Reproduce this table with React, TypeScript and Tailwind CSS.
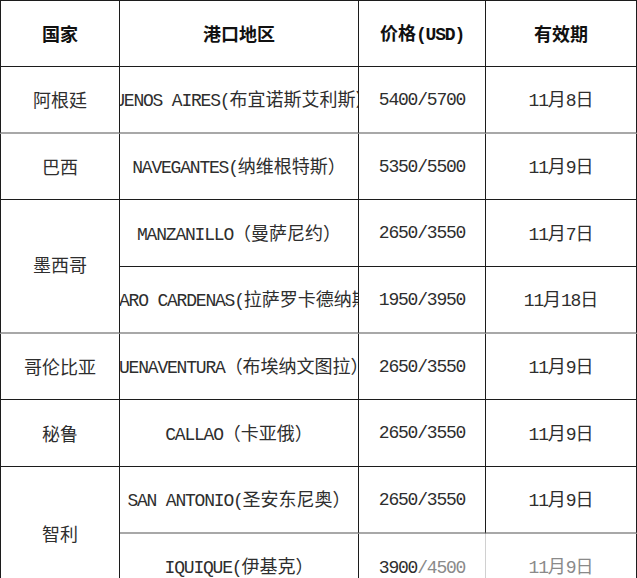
import React from "react";

const CJK = /([\u3000-\u9fff\uff00-\uffef]+)/;

function Mixed({ text, bold = false }: { text: string; bold?: boolean }) {
  return (
    <span className="whitespace-nowrap leading-none">
      {text
        .split(CJK)
        .filter(Boolean)
        .map((part, i) =>
          CJK.test(part) ? (
            <span
              key={i}
              className={
                bold
                  ? "font-['Noto_Sans_CJK_SC',sans-serif] text-[18px] font-bold"
                  : "font-['Noto_Sans_CJK_SC',sans-serif] text-[18px] font-normal"
              }
            >
              {part}
            </span>
          ) : (
            <span
              key={i}
              className={
                bold
                  ? "font-['Liberation_Mono',monospace] text-[18px] font-bold tracking-[-1.2px]"
                  : "font-['Liberation_Mono',monospace] text-[18px] tracking-[-1.2px]"
              }
            >
              {part}
            </span>
          )
        )}
    </span>
  );
}

function Cell({
  children,
  className = "",
}: {
  children?: React.ReactNode;
  className?: string;
}) {
  return (
    <div
      className={
        "flex items-center justify-center overflow-hidden whitespace-nowrap border-r border-b border-[#1c1c1c] text-[#2e2e2e] " +
        className
      }
    >
      {children}
    </div>
  );
}

const gray = "border-b-2 border-b-[#a8a8a8]";

export default function App() {
  return (
    <div className="h-[578px] w-[637px] overflow-hidden bg-white">
      <div className="grid grid-cols-[120px_239px_127px_151px] grid-rows-[67px_67px_66px_67px_67px_66px_67px_67px_66px]">
        {/* header */}
        <Cell className="border-t border-l text-[#111]">
          <Mixed text="国家" bold />
        </Cell>
        <Cell className="border-t text-[#111]">
          <Mixed text="港口地区" bold />
        </Cell>
        <Cell className="border-t text-[#111]">
          <Mixed text="价格(USD)" bold />
        </Cell>
        <Cell className="border-t text-[#111]">
          <Mixed text="有效期" bold />
        </Cell>

        {/* 阿根廷 */}
        <Cell className={"border-l " + gray}>
          <Mixed text="阿根廷" />
        </Cell>
        <Cell className={gray}>
          <Mixed text="BUENOS AIRES(布宜诺斯艾利斯）" />
        </Cell>
        <Cell className={gray}>
          <Mixed text="5400/5700" />
        </Cell>
        <Cell className={gray}>
          <Mixed text="11月8日" />
        </Cell>

        {/* 巴西 */}
        <Cell className="border-l">
          <Mixed text="巴西" />
        </Cell>
        <Cell>
          <Mixed text="NAVEGANTES(纳维根特斯）" />
        </Cell>
        <Cell>
          <Mixed text="5350/5500" />
        </Cell>
        <Cell>
          <Mixed text="11月9日" />
        </Cell>

        {/* 墨西哥 */}
        <Cell className={"row-span-2 border-l pb-1 " + gray}>
          <Mixed text="墨西哥" />
        </Cell>
        <Cell>
          <Mixed text="MANZANILLO（曼萨尼约）" />
        </Cell>
        <Cell>
          <Mixed text="2650/3550" />
        </Cell>
        <Cell>
          <Mixed text="11月7日" />
        </Cell>
        <Cell className={gray}>
          <Mixed text="LAZARO CARDENAS(拉萨罗卡德纳斯）" />
        </Cell>
        <Cell className={gray}>
          <Mixed text="1950/3950" />
        </Cell>
        <Cell className={gray}>
          <Mixed text="11月18日" />
        </Cell>

        {/* 哥伦比亚 */}
        <Cell className="border-l">
          <Mixed text="哥伦比亚" />
        </Cell>
        <Cell>
          <Mixed text="BUENAVENTURA（布埃纳文图拉）" />
        </Cell>
        <Cell>
          <Mixed text="2650/3550" />
        </Cell>
        <Cell>
          <Mixed text="11月9日" />
        </Cell>

        {/* 秘鲁 */}
        <Cell className="border-l">
          <Mixed text="秘鲁" />
        </Cell>
        <Cell>
          <Mixed text="CALLAO（卡亚俄）" />
        </Cell>
        <Cell>
          <Mixed text="2650/3550" />
        </Cell>
        <Cell>
          <Mixed text="11月9日" />
        </Cell>

        {/* 智利 */}
        <Cell className="row-span-2 border-l">
          <Mixed text="智利" />
        </Cell>
        <Cell className={gray}>
          <Mixed text="SAN ANTONIO(圣安东尼奥）" />
        </Cell>
        <Cell className={gray}>
          <Mixed text="2650/3550" />
        </Cell>
        <Cell className={gray}>
          <Mixed text="11月9日" />
        </Cell>
        <Cell>
          <Mixed text="IQUIQUE(伊基克）" />
        </Cell>
        <Cell className="border-r-[#d0d0d0]">
          <span className="whitespace-nowrap">
            <Mixed text="3900" />
            <span className="text-[#8a8a8a]">
              <Mixed text="/4500" />
            </span>
          </span>
        </Cell>
        <Cell className="text-[#8a8a8a]">
          <Mixed text="11月9日" />
        </Cell>
      </div>
    </div>
  );
}
